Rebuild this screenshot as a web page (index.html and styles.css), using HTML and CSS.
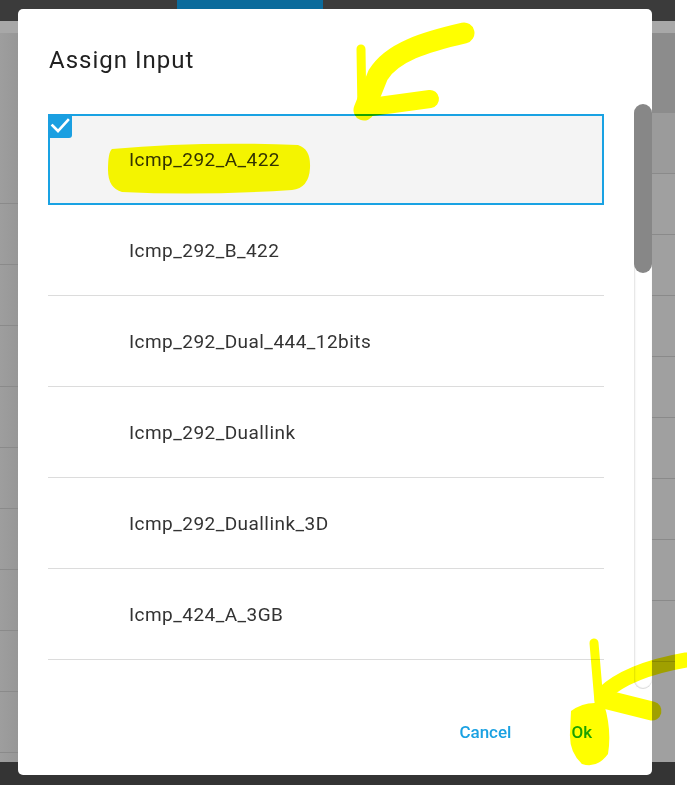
FILE: index.html
```html
<!DOCTYPE html>
<html lang="en">
<head>
<meta charset="utf-8">
<title>Assign Input</title>
<link rel="stylesheet" href="styles.css">
</head>
<body>
<div class="app">
  <div class="topbar"><div class="tab"></div></div>
  <div class="subbar"></div>
  <div class="content">
    <div class="col col-left">
      <div class="bg-row bg-row-first"></div>
      <div class="bg-row"></div><div class="bg-row"></div><div class="bg-row"></div>
      <div class="bg-row"></div><div class="bg-row"></div><div class="bg-row"></div>
      <div class="bg-row"></div><div class="bg-row"></div><div class="bg-row"></div>
    </div>
    <div class="col col-mid"></div>
    <div class="col col-right">
      <div class="bg-head"></div>
      <div class="bg-row bg-row-light"></div>
      <div class="bg-row"></div><div class="bg-row"></div><div class="bg-row"></div>
      <div class="bg-row"></div><div class="bg-row"></div><div class="bg-row"></div>
      <div class="bg-row"></div><div class="bg-row"></div>
    </div>
  </div>
  <div class="bottombar"></div>
</div>

<div class="dialog">
  <h2 class="dialog-title">Assign Input</h2>
  <div class="dialog-body">
    <ul class="list">
      <li class="item selected">
        <span class="check"><svg width="24" height="24" viewBox="0 0 24 24"><polyline points="4.5,11.5 10,17 20,6" fill="none" stroke="#fff" stroke-width="2.6" stroke-linecap="square"/></svg></span>
        Icmp_292_A_422
      </li>
      <li class="item">Icmp_292_B_422</li>
      <li class="item">Icmp_292_Dual_444_12bits</li>
      <li class="item">Icmp_292_Duallink</li>
      <li class="item">Icmp_292_Duallink_3D</li>
      <li class="item">Icmp_424_A_3GB</li>
    </ul>
    <div class="scrollbar"><div class="thumb"></div></div>
  </div>
  <div class="dialog-actions">
    <button class="btn">Cancel</button>
    <button class="btn">Ok</button>
  </div>
</div>

<svg class="marks" width="687" height="785" viewBox="0 0 687 785">
  <g fill="none" stroke="#ffff00" stroke-linecap="round" stroke-linejoin="round">
    <path d="M464 33 C425 42 392 52 378 75 L364 110" stroke-width="21"/>
    <path d="M361 49 L362 114" stroke-width="9"/>
    <path d="M364 108 L430 99" stroke-width="18"/>
    <path d="M594 643 L599 702" stroke-width="9"/>
    <path d="M686 660 C652 666 622 676 603 694" stroke-width="15"/>
    <path d="M652 711 L604 699" stroke-width="19"/>
  </g>
  <g fill="#ffff00">
    <path d="M112 149 Q200 141 298 145 Q311 149 310 168 Q309 188 292 190 Q200 196 122 192 Q108 188 108 170 Q108 152 112 149 Z"/>
    <path d="M571 711 Q586 700 604 704 Q612 730 608 754 Q597 769 582 764 Q569 752 570 733 Z"/>
  </g>
</svg>
</body>
</html>
```

FILE: styles.css
```css
html, body {
  margin: 0;
  padding: 0;
}

body {
  width: 687px;
  height: 785px;
  background: #ffffff;
  position: relative;
  overflow: hidden;
  font-family: Roboto, "Liberation Sans", Arial, sans-serif;
}

.app {
  width: 675px;
  height: 785px;
  display: flex;
  flex-direction: column;
  background: #9c9c9c;
}

.topbar {
  height: 21px;
  background: #3b3b3b;
  flex: none;
}

.tab {
  margin-left: 177px;
  width: 146px;
  height: 21px;
  background: #0b6b9c;
}

.subbar {
  height: 12px;
  background: #a8a8a8;
  flex: none;
}

.content {
  flex: 1;
  display: flex;
  overflow: hidden;
}

.col {
  display: flex;
  flex-direction: column;
}

.col-left {
  width: 18px;
  background: linear-gradient(to right, #9e9e9e, #979797);
}

.col-mid {
  flex: 1;
  background: #9a9a9a;
}

.col-right {
  width: 23px;
  background: #a0a0a0;
}

.bg-row {
  height: 60px;
  flex: none;
  border-bottom: 1px solid #8a8a8a;
}

.bg-row-first {
  height: 170px;
}

.bg-head {
  height: 80px;
  flex: none;
  background: #8c8c8c;
}

.bg-row-light {
  background: #9b9b9b;
}

.bottombar {
  height: 23px;
  flex: none;
  background: #343434;
}

/* Dialog */
.dialog {
  position: absolute;
  left: 18px;
  top: 9px;
  width: 634px;
  height: 766px;
  background: #ffffff;
  border-radius: 5px;
  display: flex;
  flex-direction: column;
  overflow: hidden;
}

.dialog-title {
  margin: 0 0 30px 0;
  padding: 38px 0 0 31px;
  font-size: 24px;
  line-height: 27px;
  font-weight: 400;
  letter-spacing: 1px;
  color: #212121;
}

.dialog-body {
  height: 585px;
  flex: none;
  display: flex;
}

.list {
  list-style: none;
  margin: 0;
  padding: 10px 0 0 30px;
  width: 556px;
  overflow: hidden;
  flex: none;
}

.item {
  box-sizing: border-box;
  height: 91px;
  border-bottom: 1px solid #dcdcdc;
  display: flex;
  align-items: center;
  padding-left: 81px;
  font-size: 19px;
  letter-spacing: 0.45px;
  color: #333333;
  position: relative;
}

.item.selected {
  height: 91px;
  border: 2px solid #19a2e3;
  background: #f4f4f4;
  padding-left: 79px;
}

.check {
  position: absolute;
  top: -2px;
  left: -2px;
  width: 24px;
  height: 24px;
  background: #1a9fe1;
  border-radius: 0 0 3px 0;
  display: block;
}

.check svg {
  display: block;
}

.scrollbar {
  margin-left: auto;
  width: 18px;
  height: 585px;
  background: #ffffff;
  border-radius: 9px;
  box-shadow: inset 2px 0 2px -1px #e2e2e2, inset 0 -1px 1px #d8d8d8;
}

.thumb {
  height: 169px;
  background: #878787;
  border-radius: 9px;
}

.dialog-actions {
  flex: 1;
  display: flex;
  justify-content: flex-end;
  align-items: center;
  gap: 60px;
  padding-right: 60px;
}

.btn {
  border: none;
  background: none;
  padding: 0;
  margin: 0;
  font-family: Roboto, "Liberation Sans", Arial, sans-serif;
  font-size: 17px;
  font-weight: 500;
  color: #1aa1e2;
  cursor: pointer;
}

/* Highlighter annotations */
.marks {
  position: absolute;
  left: 0;
  top: 0;
  mix-blend-mode: multiply;
  pointer-events: none;
}
```
